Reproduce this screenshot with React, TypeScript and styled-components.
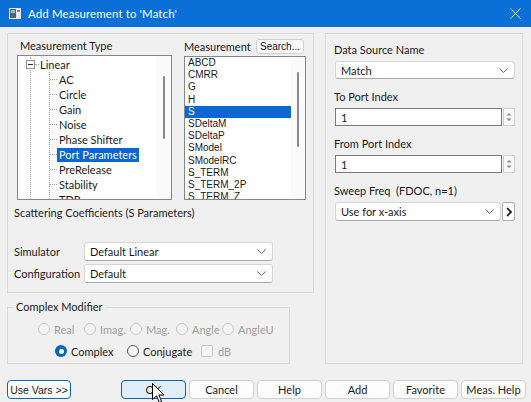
import React from 'react';
import styled, { createGlobalStyle, css } from 'styled-components';

const Global = createGlobalStyle`
  html, body { margin: 0; padding: 0; }
  body {
    width: 531px; height: 402px; overflow: hidden; background: #f0f0f0;
    font-family: Lato, "Noto Sans", sans-serif; font-size: 11px; color: #1b1b1b;
  }
  * { box-sizing: border-box; }
`;

const Window = styled.div`
  width: 531px; height: 402px; display: flex; flex-direction: column;
  background: #f0f0f0; position: relative; overflow: hidden;
`;

const TitleBar = styled.div`
  height: 27px; flex: none; background: #0a6fd6; display: flex; align-items: center;
  padding: 0 10px 0 9px; color: #fff; font-size: 11.5px;
`;

const TitleText = styled.span`
  margin-left: 7px; flex: 1; letter-spacing: 0.1px;
`;

const Body = styled.div`
  flex: 1; display: flex; flex-direction: column; padding: 6px 5px 0 7px;
`;

const Main = styled.div`
  display: grid; grid-template-columns: 307px 198px; column-gap: 11px; height: 331px;
`;

const LeftCol = styled.div`
  display: flex; flex-direction: column;
`;

const Panel = styled.div`
  border: 1px solid #d9d9d9;
`;

const TopPanel = styled(Panel)`
  height: 260px; padding: 3px 7px 0 7px; display: flex; flex-direction: column;
`;

const Columns = styled.div`
  display: flex; gap: 12px; margin-left: 2px;
`;

const Col = styled.div<{ $w: number }>`
  width: ${p => p.$w}px; display: flex; flex-direction: column;
`;

const ColLabel = styled.div`
  height: 18px; line-height: 18px; padding-left: 3px;
`;

const MeasHeader = styled.div`
  height: 19px; display: flex; align-items: center; justify-content: space-between;
`;

const SmallButton = styled.button`
  width: 48px; height: 15px; padding: 0; margin-right: 2px;
  font-family: "Liberation Sans", Arial, sans-serif; font-size: 10px; color: #111;
  background: #fdfdfd; border: 1px solid #cfcfcf; border-radius: 3px;
  display: flex; align-items: center; justify-content: center;
`;

const ScrollBox = styled.div<{ $h: number }>`
  height: ${p => p.$h}px; border: 1px solid #828790; background: #fff;
  display: flex; overflow: hidden;
`;

const BoxContent = styled.div`
  flex: 1; overflow: hidden; min-width: 0;
`;

const ScrollTrack = styled.div`
  width: 14px; flex: none; background: #fafafa; display: flex; justify-content: center;
`;

const Thumb = styled.div<{ $top: number; $h: number }>`
  width: 2px; margin-top: ${p => p.$top}px; height: ${p => p.$h}px;
  background: #8a8a8a; border-radius: 1px;
`;

const TreeInner = styled.div`
  padding-top: 1px;
`;

const Branch = styled.div`
  margin-left: 12px; border-left: 1px dotted #a0a0a0;
`;

const Row = styled.div`
  height: 15px; display: flex; align-items: center; white-space: nowrap;
`;

const RootRow = styled(Row)`
  margin-left: -5px;
`;

const MinusBox = styled.span`
  width: 9px; height: 9px; flex: none; border: 1px solid #919191; background: #fff;
  display: flex; align-items: center; justify-content: center;
  &::after { content: ''; width: 5px; height: 1px; background: #333; }
`;

const Connector = styled.span<{ $w: number }>`
  width: ${p => p.$w}px; flex: none; border-top: 1px dotted #a0a0a0;
`;

const Children = styled.div`
  margin-left: 18px; border-left: 1px dotted #a0a0a0;
`;

const NodeLabel = styled.span<{ $sel?: boolean; $pl?: number }>`
  padding: 0 2px 0 ${p => p.$pl ?? 2}px; line-height: 14px;
  ${p => p.$sel && css`background: #0a66d1; color: #fff;`}
`;

const ListItem = styled.div<{ $sel?: boolean }>`
  height: 12.2px; line-height: 12.2px; padding-left: 3px; white-space: nowrap;
  font-family: "Liberation Sans", Arial, sans-serif; font-size: 10px;
  ${p => p.$sel && css`background: #0a66d1; color: #fff;`}
`;

const Description = styled.div`
  margin-top: 6px; line-height: 14px; margin-left: -1px;
`;

const FormRow = styled.div<{ $mt: number }>`
  display: flex; align-items: center; margin-top: ${p => p.$mt}px;
`;

const FormLabel = styled.span`
  width: 70px; flex: none; margin-left: -1px;
`;

const Select = styled.div<{ $w?: number; $h?: number }>`
  ${p => (p.$w ? `width: ${p.$w}px;` : 'flex: 1;')}
  height: ${p => p.$h ?? 19}px; background: #fff;
  border: 1px solid #d6d6d6; border-bottom-color: #a9a9a9; border-radius: 3px;
  display: flex; align-items: center; justify-content: space-between; padding: 0 6px 0 5px;
`;

const Chevron = () => (
  <svg width="9" height="5" viewBox="0 0 9 5">
    <polyline points="0.5,0.5 4.5,4.5 8.5,0.5" fill="none" stroke="#666" strokeWidth="1" />
  </svg>
);

const Group = styled.fieldset`
  margin: 7px 0 0 0; padding: 0; width: 283px; height: 64px;
  border: 1px solid #d9d9d9; min-width: 0;
`;

const Legend = styled.legend`
  padding: 0 3px; margin-left: 5px; line-height: 14px;
`;

const RadioRow = styled.div<{ $indent: number; $mt: number }>`
  display: flex; align-items: center; height: 14px;
  padding-left: ${p => p.$indent}px; margin-top: ${p => p.$mt}px;
`;

const Choice = styled.div<{ $w?: number; $off?: boolean; $gap?: number }>`
  ${p => p.$w && `width: ${p.$w}px;`} flex: none; display: flex; align-items: center;
  gap: ${p => p.$gap ?? 4}px;
  color: ${p => (p.$off ? '#a0a0a0' : '#1b1b1b')};
`;

const RadioDot = styled.span<{ $on?: boolean; $off?: boolean }>`
  width: 12px; height: 12px; border-radius: 50%; flex: none;
  display: flex; align-items: center; justify-content: center;
  ${p =>
    p.$on
      ? css`background: #0067c0; &::after { content: ''; width: 5px; height: 5px; border-radius: 50%; background: #fff; }`
      : p.$off
      ? css`border: 1px solid #c8c8c8; background: #f4f4f4;`
      : css`border: 1px solid #555; background: #f8f8f8;`}
`;

const CheckBox = styled.span`
  width: 12px; height: 12px; border-radius: 2px; border: 1px solid #c8c8c8; background: #f4f4f4; flex: none;
`;

const RightPanel = styled(Panel)`
  height: 331px; padding: 8px 7px 0 9px; display: flex; flex-direction: column; gap: 10px;
`;

const FieldGroup = styled.div`
  display: flex; flex-direction: column; gap: 3px;
`;

const FieldLabel = styled.div`
  line-height: 16px; height: 16px; margin-left: -1px;
`;

const FieldLine = styled.div`
  display: flex; width: 180px; gap: 1px;
`;

const TextInput = styled.div`
  flex: 1; height: 18px; background: #fff; border: 1px solid #7a7a7a;
  display: flex; align-items: center; padding-left: 5px;
`;

const Spinner = styled.div`
  width: 12px; height: 18px; border: 1px solid #d0d0d0; background: #f7f7f7;
  display: flex; align-items: center; justify-content: center;
`;

const ArrowButton = styled.div`
  width: 13px; height: 19px; border: 1px solid #adadad; border-radius: 2px; background: #fff;
  display: flex; align-items: center; justify-content: center;
`;

const ButtonBar = styled.div`
  display: flex; justify-content: space-between; margin-top: 16px;
`;

const ButtonGroup = styled.div`
  display: flex; gap: 3px;
`;

const Button = styled.button<{ $kind?: 'default' | 'hover'; $w?: number }>`
  width: ${p => p.$w ?? 65}px; height: 19px; padding: 0;
  font-family: Lato, "Noto Sans", sans-serif; font-size: 11px; color: #1b1b1b;
  background: #fdfdfd; border: 1px solid #d0d0d0; border-radius: 4px;
  ${p => p.$kind === 'default' && css`border: 1px solid #0067c0; font-family: "Liberation Sans", Arial, sans-serif; font-size: 10.5px;`}
  ${p => p.$kind === 'hover' && css`border: 1px solid #0067c0; background: #e0eef9;`}
`;

const Cursor = styled.svg`
  position: absolute; left: 152px; top: 383px; pointer-events: none;
`;

const SpinArrows = () => (
  <svg width="6" height="12" viewBox="0 0 6 12">
    <path d="M3 2 L5.5 4.5 L0.5 4.5 Z M3 10 L5.5 7.5 L0.5 7.5 Z" fill="#8a8a8a" />
  </svg>
);

const treeItems = ['AC', 'Circle', 'Gain', 'Noise', 'Phase Shifter', 'Port Parameters', 'PreRelease', 'Stability', 'TDR'];
const listItems = ['ABCD', 'CMRR', 'G', 'H', 'S', 'SDeltaM', 'SDeltaP', 'SModel', 'SModelRC', 'S_TERM', 'S_TERM_2P', 'S_TERM_Z'];

export default function App() {
  return (
    <Window>
      <Global />
      <TitleBar>
        <svg width="12" height="11" viewBox="0 0 12 11">
          <rect x="0" y="0" width="12" height="11" fill="#e4e8ee" />
          <rect x="1" y="1" width="6" height="9" fill="#56627a" />
          <rect x="2" y="2" width="4" height="3" fill="#9fb3cc" />
          <rect x="8" y="2" width="3" height="2" fill="#7d8899" />
        </svg>
        <TitleText>Add Measurement to 'Match'</TitleText>
        <svg width="11" height="11" viewBox="0 0 11 11">
          <path d="M0.5 0.5 L10.5 10.5 M10.5 0.5 L0.5 10.5" stroke="#fff" strokeWidth="1" />
        </svg>
      </TitleBar>
      <Body>
        <Main>
          <LeftCol>
            <TopPanel>
              <Columns>
                <Col $w={155}>
                  <ColLabel>Measurement Type</ColLabel>
                  <ScrollBox $h={145}>
                    <BoxContent>
                      <TreeInner>
                        <Branch>
                          <RootRow>
                            <MinusBox />
                            <Connector $w={4} />
                            <NodeLabel $pl={1}>Linear</NodeLabel>
                          </RootRow>
                          <Children>
                            {treeItems.map(t => (
                              <Row key={t}>
                                <Connector $w={7} />
                                <NodeLabel $sel={t === 'Port Parameters'}>{t}</NodeLabel>
                              </Row>
                            ))}
                          </Children>
                        </Branch>
                      </TreeInner>
                    </BoxContent>
                    <ScrollTrack>
                      <Thumb $top={20} $h={63} />
                    </ScrollTrack>
                  </ScrollBox>
                </Col>
                <Col $w={122}>
                  <MeasHeader>
                    <span>Measurement</span>
                    <SmallButton>Search...</SmallButton>
                  </MeasHeader>
                  <ScrollBox $h={144}>
                    <BoxContent>
                      {listItems.map(t => (
                        <ListItem key={t} $sel={t === 'S'}>{t}</ListItem>
                      ))}
                    </BoxContent>
                    <ScrollTrack>
                      <Thumb $top={15} $h={75} />
                    </ScrollTrack>
                  </ScrollBox>
                </Col>
              </Columns>
              <Description>Scattering Coefficients (S Parameters)</Description>
              <FormRow $mt={22}>
                <FormLabel>Simulator</FormLabel>
                <Select $w={189}>
                  <span>Default Linear</span>
                  <Chevron />
                </Select>
              </FormRow>
              <FormRow $mt={3}>
                <FormLabel>Configuration</FormLabel>
                <Select $w={189}>
                  <span>Default</span>
                  <Chevron />
                </Select>
              </FormRow>
            </TopPanel>
            <Group>
              <Legend>Complex Modifier</Legend>
              <RadioRow $indent={30} $mt={8}>
                {['Real', 'Imag.', 'Mag.', 'Angle', 'AngleU'].map(t => (
                  <Choice key={t} $w={46} $off>
                    <RadioDot $off />
                    <span>{t}</span>
                  </Choice>
                ))}
              </RadioRow>
              <RadioRow $indent={47} $mt={8}>
                <Choice $w={72}>
                  <RadioDot $on />
                  <span>Complex</span>
                </Choice>
                <Choice $w={74}>
                  <RadioDot />
                  <span>Conjugate</span>
                </Choice>
                <Choice $off $gap={5}>
                  <CheckBox />
                  <span>dB</span>
                </Choice>
              </RadioRow>
            </Group>
          </LeftCol>
          <RightPanel>
            <FieldGroup>
              <FieldLabel>Data Source Name</FieldLabel>
              <FieldLine>
                <Select $h={18}>
                  <span>Match</span>
                  <Chevron />
                </Select>
              </FieldLine>
            </FieldGroup>
            <FieldGroup>
              <FieldLabel>To Port Index</FieldLabel>
              <FieldLine>
                <TextInput>1</TextInput>
                <Spinner>
                  <SpinArrows />
                </Spinner>
              </FieldLine>
            </FieldGroup>
            <FieldGroup>
              <FieldLabel>From Port Index</FieldLabel>
              <FieldLine>
                <TextInput>1</TextInput>
                <Spinner>
                  <SpinArrows />
                </Spinner>
              </FieldLine>
            </FieldGroup>
            <FieldGroup>
              <FieldLabel>Sweep Freq&nbsp;&nbsp;(FDOC, n=1)</FieldLabel>
              <FieldLine>
                <Select>
                  <span>Use for x-axis</span>
                  <Chevron />
                </Select>
                <ArrowButton>
                  <svg width="6" height="10" viewBox="0 0 6 10">
                    <polyline points="1,1 5,5 1,9" fill="none" stroke="#111" strokeWidth="1.6" />
                  </svg>
                </ArrowButton>
              </FieldLine>
            </FieldGroup>
          </RightPanel>
        </Main>
        <ButtonBar>
          <Button $kind="default" $w={64}>Use Vars &gt;&gt;</Button>
          <ButtonGroup>
            <Button $kind="hover">OK</Button>
            <Button>Cancel</Button>
            <Button>Help</Button>
            <Button>Add</Button>
            <Button>Favorite</Button>
            <Button>Meas. Help</Button>
          </ButtonGroup>
        </ButtonBar>
      </Body>
      <Cursor width="13" height="21" viewBox="0 0 13 21">
        <path d="M0.5 0.5 L0.5 16.5 L4.5 12.8 L7.3 19.3 L9.6 18.3 L6.9 12 L12 12 Z" fill="#fff" stroke="#000" strokeWidth="1" strokeLinejoin="round" />
      </Cursor>
    </Window>
  );
}
